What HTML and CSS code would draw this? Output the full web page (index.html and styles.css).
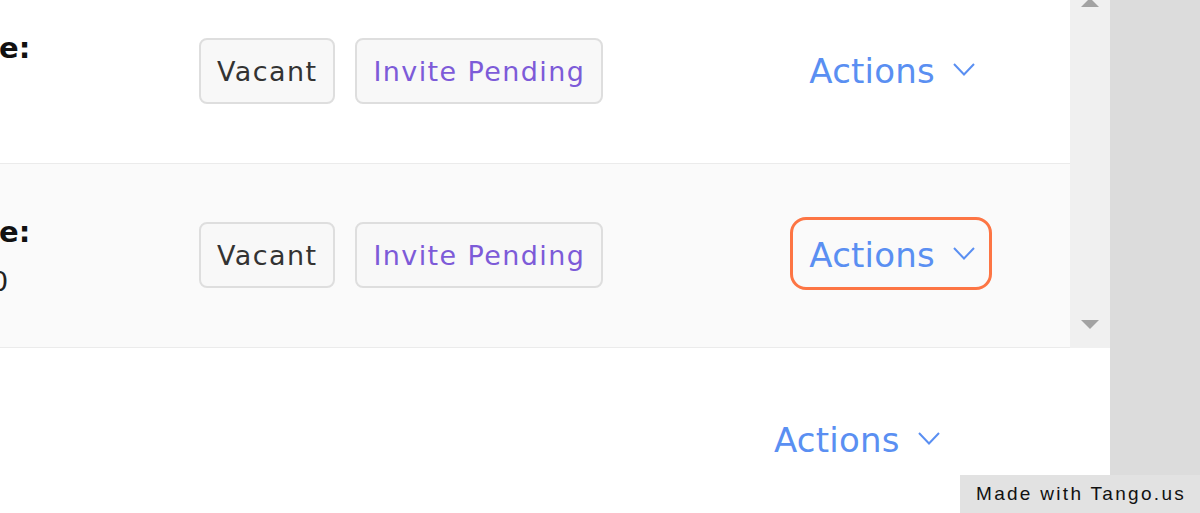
FILE: index.html
```html
<!DOCTYPE html>
<html>
<head>
<meta charset="utf-8">
<link rel="stylesheet" href="styles.css">
</head>
<body>
<div class="frame">
  <div class="viewport">
    <div class="list">
      <div class="list-inner">
        <div class="row">
          <div class="label"><div class="label-title">e:</div></div>
          <div class="badges">
            <span class="badge badge-vacant">Vacant</span>
            <span class="badge badge-invite">Invite Pending</span>
          </div>
          <button class="actions">Actions
            <svg class="chev" width="22" height="15" viewBox="0 0 22 15"><polyline points="1,2 11,12.5 21,2" fill="none" stroke="currentColor" stroke-width="2"/></svg>
          </button>
        </div>
        <div class="row row-alt">
          <div class="label"><div class="label-title">e:</div><div class="label-value">0</div></div>
          <div class="badges">
            <span class="badge badge-vacant">Vacant</span>
            <span class="badge badge-invite">Invite Pending</span>
          </div>
          <button class="actions actions-highlight">Actions
            <svg class="chev" width="22" height="15" viewBox="0 0 22 15"><polyline points="1,2 11,12.5 21,2" fill="none" stroke="currentColor" stroke-width="2"/></svg>
          </button>
        </div>
      </div>
    </div>
    <div class="scrollbar">
      <svg class="arrow" width="18" height="7" viewBox="0 0 18 7"><polygon points="0,7 18,7 9,-2" fill="#a3a3a3"/></svg>
      <svg class="arrow arrow-down" width="18" height="9" viewBox="0 0 18 9"><polygon points="0,0 18,0 9,9" fill="#a3a3a3"/></svg>
    </div>
  </div>
  <div class="footer">
    <button class="actions">Actions
      <svg class="chev" width="22" height="15" viewBox="0 0 22 15"><polyline points="1,2 11,12.5 21,2" fill="none" stroke="currentColor" stroke-width="2"/></svg>
    </button>
  </div>
</div>
<div class="watermark">Made with Tango.us</div>
</body>
</html>
```
FILE: styles.css
```css
html, body {
  margin: 0;
  padding: 0;
}
body {
  width: 1200px;
  height: 513px;
  overflow: hidden;
  background: #dcdcdc;
  font-family: "DejaVu Sans", "Liberation Sans", sans-serif;
  position: relative;
}
.frame {
  width: 1110px;
  height: 513px;
  display: flex;
  flex-direction: column;
  background: #ffffff;
}
.viewport {
  display: flex;
  height: 348px;
  flex: none;
}
.list {
  width: 1070px;
  overflow: hidden;
  background: #ffffff;
}
.list-inner {
  margin-top: -20px;
}
.row {
  display: flex;
  align-items: flex-start;
  height: 184px;
  box-sizing: border-box;
  padding-top: 58px;
  border-bottom: 1px solid #ebebeb;
  background: #ffffff;
}
.row-alt {
  background: #fafafa;
}
.label {
  width: 199px;
  flex: none;
  overflow: hidden;
  margin-top: -7px;
  white-space: nowrap;
}
.label-title {
  font-weight: bold;
  font-size: 29px;
  line-height: 34px;
  color: #111;
  text-indent: -1px;
}
.label-value {
  font-size: 27px;
  line-height: 32px;
  margin-top: 17px;
  color: #222;
  text-indent: -9px;
}
.badges {
  display: flex;
  gap: 20px;
  flex: none;
}
.badge {
  display: flex;
  align-items: center;
  height: 66px;
  box-sizing: border-box;
  padding: 1px 16px 0 16px;
  border: 2px solid #dedede;
  border-radius: 8px;
  background: #f8f8f8;
  font-size: 27px;
  letter-spacing: 1.4px;
  white-space: nowrap;
}
.badge-vacant {
  color: #333333;
}
.badge-invite {
  color: #7d5bd8;
}
.actions {
  display: flex;
  align-items: center;
  margin-top: -5px;
  margin-left: 187px;
  height: 73px;
  width: 202px;
  box-sizing: border-box;
  padding: 3px 0 0 16px;
  border: 3px solid transparent;
  border-radius: 16px;
  background: transparent;
  font-family: "DejaVu Sans", "Liberation Sans", sans-serif;
  font-size: 34px;
  letter-spacing: 0.2px;
  font-weight: normal;
  color: #5a8ff2;
  white-space: nowrap;
}
.actions-highlight {
  border-color: #fd7544;
}
.chev {
  margin-left: 18px;
  margin-top: -3px;
  flex: none;
}
.scrollbar {
  width: 40px;
  flex: none;
  background: #f0f0f0;
  display: flex;
  flex-direction: column;
  align-items: center;
  justify-content: space-between;
}
.arrow-down {
  margin-bottom: 19px;
}
.footer {
  flex: 1;
  background: #ffffff;
  padding: 54px 0 0 755px;
}
.footer .actions {
  margin: 0;
}
.watermark {
  position: absolute;
  right: 0;
  bottom: 0;
  width: 240px;
  height: 38px;
  box-sizing: border-box;
  padding-left: 16px;
  display: flex;
  align-items: center;
  background: #e2e2e2;
  color: #111;
  font-family: "Liberation Sans", sans-serif;
  font-size: 19px;
  letter-spacing: 2.3px;
  white-space: nowrap;
}
```
